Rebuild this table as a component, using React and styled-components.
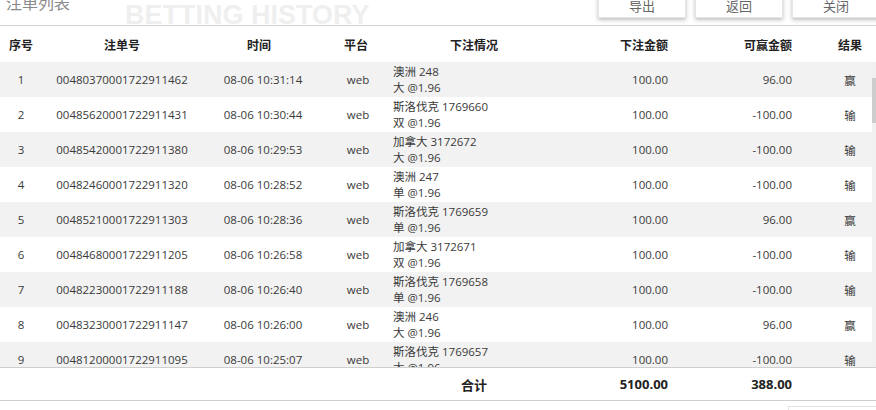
import React from 'react';
import styled, { createGlobalStyle } from 'styled-components';

const GlobalStyle = createGlobalStyle`
  html, body {
    margin: 0;
    padding: 0;
    background: #fff;
  }
  body {
    font-family: "Open Sans", "Noto Sans CJK SC", sans-serif;
  }
`;

const headers = [
  { label: '序号', align: 'center' },
  { label: '注单号', align: 'center' },
  { label: '时间', align: 'center', pr: 8 },
  { label: '平台', align: 'center', pr: 4 },
  { label: '下注情况', align: 'center' },
  { label: '下注金额', align: 'right', pr: 8 },
  { label: '可赢金额', align: 'right', pr: 8 },
  { label: '结果', align: 'center', pl: 24 },
];

const bets = [
  { orderId: '00480370001722911462', time: '08-06 10:31:14', game: '澳洲 248', pick: '大 @1.96', win: '96.00', result: '赢' },
  { orderId: '00485620001722911431', time: '08-06 10:30:44', game: '斯洛伐克 1769660', pick: '双 @1.96', win: '-100.00', result: '输' },
  { orderId: '00485420001722911380', time: '08-06 10:29:53', game: '加拿大 3172672', pick: '大 @1.96', win: '-100.00', result: '输' },
  { orderId: '00482460001722911320', time: '08-06 10:28:52', game: '澳洲 247', pick: '单 @1.96', win: '-100.00', result: '输' },
  { orderId: '00485210001722911303', time: '08-06 10:28:36', game: '斯洛伐克 1769659', pick: '单 @1.96', win: '96.00', result: '赢' },
  { orderId: '00484680001722911205', time: '08-06 10:26:58', game: '加拿大 3172671', pick: '双 @1.96', win: '-100.00', result: '输' },
  { orderId: '00482230001722911188', time: '08-06 10:26:40', game: '斯洛伐克 1769658', pick: '单 @1.96', win: '-100.00', result: '输' },
  { orderId: '00483230001722911147', time: '08-06 10:26:00', game: '澳洲 246', pick: '大 @1.96', win: '96.00', result: '赢' },
  { orderId: '00481200001722911095', time: '08-06 10:25:07', game: '斯洛伐克 1769657', pick: '大 @1.96', win: '-100.00', result: '输' },
  { orderId: '00481050001722911060', time: '08-06 10:24:31', game: '澳洲 245', pick: '小 @1.96', win: '-100.00', result: '输' },
];

const App = () => {
  return (
    <>
      <GlobalStyle />
      <Page>
        <TopBar>
          <Title>注单列表</Title>
          <Watermark>BETTING HISTORY</Watermark>
          <Buttons>
            <TopButton>导出</TopButton>
            <TopButton>返回</TopButton>
            <TopButton>关闭</TopButton>
          </Buttons>
        </TopBar>

        <HeadRow>
          {headers.map((h) => (
            <HeadCell key={h.label} $align={h.align} $pl={h.pl} $pr={h.pr}>
              {h.label}
            </HeadCell>
          ))}
        </HeadRow>

        <Body>
          <Rows>
            {bets.map((b, i) => (
              <Row key={b.orderId} $striped={i % 2 === 0}>
                <Cell $align="center">{i + 1}</Cell>
                <Cell $align="center">{b.orderId}</Cell>
                <Cell $align="center">{b.time}</Cell>
                <Cell $align="center">web</Cell>
                <DetailCell $align="left" $pl={1}>
                  <span>{b.game}</span>
                  <span>{b.pick}</span>
                </DetailCell>
                <Cell $align="right" $pr={8}>100.00</Cell>
                <Cell $align="right" $pr={8}>{b.win}</Cell>
                <Cell $align="center" $pl={28}>{b.result}</Cell>
              </Row>
            ))}
          </Rows>
          <ScrollTrack>
            <ScrollThumb />
          </ScrollTrack>
        </Body>

        <TotalRow>
          <Cell />
          <Cell />
          <Cell />
          <Cell />
          <TotalCell $align="center">合计</TotalCell>
          <TotalCell $align="right" $pr={8}>5100.00</TotalCell>
          <TotalCell $align="right" $pr={8}>388.00</TotalCell>
          <Cell />
        </TotalRow>

        <BottomBar>
          <GhostButton />
        </BottomBar>
      </Page>
    </>
  );
};

const Page = styled.div`
  width: 876px;
  height: 410px;
  overflow: hidden;
  background: #fff;
  color: #3a3a3a;
`;

const TopBar = styled.div`
  height: 44px;
  margin-top: -19px;
  display: flex;
  align-items: flex-end;
  border-bottom: 1px solid #d2d2d2;
  box-shadow: 0 2px 3px rgba(0, 0, 0, 0.08);
`;

const Title = styled.div`
  font-family: "Noto Sans CJK SC", sans-serif;
  font-size: 16px;
  line-height: 20px;
  color: #8a8a8a;
  padding-left: 6px;
  margin-bottom: 13px;
`;

const Watermark = styled.div`
  font-family: "Liberation Sans", sans-serif;
  font-weight: 700;
  font-size: 27px;
  line-height: 22px;
  height: 21px;
  overflow: hidden;
  color: #efefef;
  margin-left: 55px;
`;

const Buttons = styled.div`
  display: flex;
  gap: 9px;
  margin-left: auto;
  margin-right: -4px;
  margin-bottom: 7px;
`;

const TopButton = styled.div`
  width: 88px;
  height: 36px;
  background: #fff;
  border: 1px solid #e6e6e6;
  box-sizing: border-box;
  box-shadow: 0 2px 4px rgba(0, 0, 0, 0.25);
  font-family: "Noto Sans CJK SC", sans-serif;
  font-size: 13px;
  color: #666;
  display: flex;
  align-items: center;
  justify-content: center;
  padding-top: 11px;
`;

const grid = `
  display: grid;
  grid-template-columns: 42px 160px 122px 68px 164px 120px 124px 1fr;
  align-items: center;
`;

const HeadRow = styled.div`
  ${grid}
  height: 36px;
  background: #fff;
`;

const Cell = styled.div`
  text-align: ${(p) => p.$align || 'center'};
  padding-left: ${(p) => p.$pl || 0}px;
  padding-right: ${(p) => p.$pr || 0}px;
  font-size: 11.5px;
  white-space: nowrap;
`;

const HeadCell = styled(Cell)`
  font-family: "Noto Sans CJK SC", sans-serif;
  font-weight: 700;
  font-size: 12px;
  color: #222;
`;

const Body = styled.div`
  height: 305px;
  display: flex;
  border-bottom: 1px solid #cfcfcf;
  overflow: hidden;
`;

const Rows = styled.div`
  flex: 1;
`;

const Row = styled.div`
  ${grid}
  height: 35px;
  background: ${(p) => (p.$striped ? '#f2f2f2' : '#fff')};
`;

const DetailCell = styled(Cell)`
  display: flex;
  flex-direction: column;
  line-height: 16px;
`;

const ScrollTrack = styled.div`
  width: 4px;
  background: #f0f0f0;
  display: flex;
  flex-direction: column;
`;

const ScrollThumb = styled.div`
  margin-top: 16px;
  height: 45px;
  background: #cdcdcd;
`;

const TotalRow = styled.div`
  ${grid}
  height: 32px;
  border-bottom: 1px solid #cfcfcf;
`;

const TotalCell = styled(Cell)`
  font-weight: 700;
  font-size: 13px;
  color: #222;
  font-family: "Open Sans", "Noto Sans CJK SC", sans-serif;
`;

const BottomBar = styled.div`
  display: flex;
  justify-content: flex-end;
  padding-top: 5px;
`;

const GhostButton = styled.div`
  width: 88px;
  height: 20px;
  border: 1px solid #e2e2e2;
  margin-right: -2px;
`;

export default App;
